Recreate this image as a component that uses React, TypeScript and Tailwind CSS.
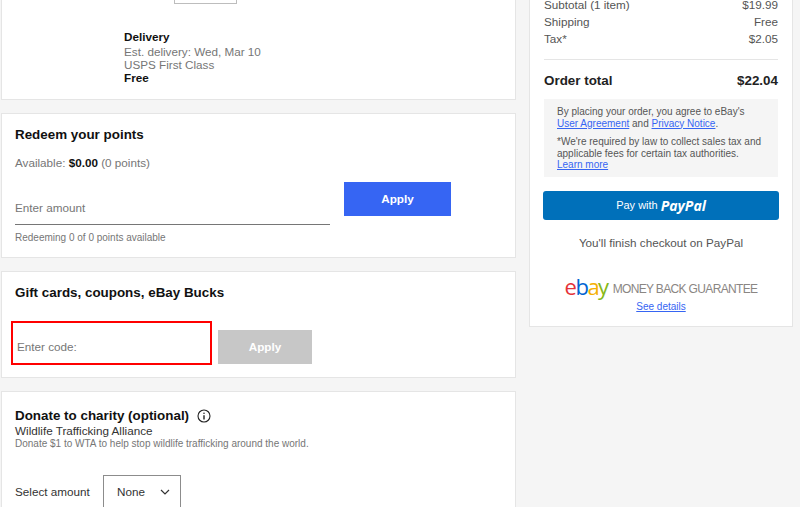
import React from "react";

function Card({ className = "", children }: { className?: string; children: React.ReactNode }) {
  return <section className={`bg-white border border-[#e5e5e5] ${className}`}>{children}</section>;
}

function Row({ label, value }: { label: string; value: string }) {
  return (
    <div className="flex justify-between h-[17px] leading-[17px]">
      <span>{label}</span>
      <span>{value}</span>
    </div>
  );
}

export default function App() {
  return (
    <div className="h-[507px] w-[800px] overflow-hidden bg-[#f5f5f5] text-[#333] text-[11.7px] flex items-start font-['Liberation_Sans',Arial,sans-serif]">
      <main className="ml-px w-[515px] flex flex-col gap-[13px] shrink-0">
        <Card className="h-[100px] border-t-0 relative pl-[122px] pt-[30px]">
          <div className="absolute left-[172px] top-0 w-[63px] h-[4px] border border-t-0 border-[#bdbdbd]" />
          <div className="font-bold text-[#111] leading-[14px]">Delivery</div>
          <div className="text-[#767676] leading-[13px] mt-[1px]">Est. delivery: Wed, Mar 10</div>
          <div className="text-[#767676] leading-[13px]">USPS First Class</div>
          <div className="font-bold text-[#111] leading-[13px]">Free</div>
        </Card>

        <Card className="h-[145px] pl-[13px] relative">
          <h2 className="text-[13.4px] font-bold text-[#111] mt-[12px] leading-[17px]">Redeem your points</h2>
          <p className="mt-[13px] leading-[14px] text-[#767676]">
            Available: <b className="text-[#111]">$0.00</b> (0 points)
          </p>
          <div className="flex mt-[12px] items-start">
            <div className="w-[315px] mt-[14px]">
              <div className="h-[29px] pt-[5px] leading-[14px] text-[#767676] border-b border-[#767676]">Enter amount</div>
              <div className="mt-[7px] text-[10px] leading-[12px] text-[#767676]">Redeeming 0 of 0 points available</div>
            </div>
            <button className="ml-[14px] w-[107px] h-[34px] bg-[#3665f3] text-white font-bold">Apply</button>
          </div>
        </Card>

        <Card className="h-[107px] pl-[13px] relative">
          <h2 className="text-[13.4px] font-bold text-[#111] mt-[12px] leading-[17px]">Gift cards, coupons, eBay Bucks</h2>
          <div className="flex items-start mt-[20px] -ml-[4px]">
            <div className="w-[201px] h-[44px] border-[2px] border-[#f00] pl-[4px] pt-[17px] leading-[14px] text-[#767676]">Enter code:</div>
            <button className="ml-[6px] mt-[9px] w-[94px] h-[34px] bg-[#c7c7c7] text-white font-bold">Apply</button>
          </div>
        </Card>

        <Card className="h-[130px] pl-[13px]">
          <div className="flex items-center mt-[15px] gap-[8px]">
            <h2 className="text-[13.4px] font-bold text-[#111] leading-[17px]">Donate to charity (optional)</h2>
            <svg width="14" height="14" viewBox="0 0 14 14" fill="none" stroke="#222" strokeWidth="1.1">
              <circle cx="7" cy="7" r="6" />
              <path d="M7 6.2V10.4" strokeWidth="1.4" />
              <circle cx="7" cy="4.2" r=".8" fill="#222" stroke="none" />
            </svg>
          </div>
          <div className="leading-[14px] text-[#333]">Wildlife Trafficking Alliance</div>
          <div className="text-[10px] leading-[12px] text-[#767676]">Donate $1 to WTA to help stop wildlife trafficking around the world.</div>
          <div className="flex items-start mt-[25px]">
            <span className="mt-[10px] leading-[14px] w-[88px]">Select amount</span>
            <div className="w-[78px] h-[40px] border border-[#8c8c8c] flex items-start pl-[13px] pt-[9px] leading-[14px]">
              None
              <svg className="ml-[15px] mt-[4px]" width="10" height="6" viewBox="0 0 10 6" fill="none" stroke="#333" strokeWidth="1.2">
                <path d="M1 1l4 4 4-4" />
              </svg>
            </div>
          </div>
        </Card>
      </main>

      <aside className="ml-[13px] w-[264px] h-[327px] bg-white border border-t-0 border-[#e5e5e5] px-[14px] shrink-0 overflow-hidden">
        <div className="-mt-[4px] text-[#555]">
          <Row label="Subtotal (1 item)" value="$19.99" />
          <Row label="Shipping" value="Free" />
          <Row label="Tax*" value="$2.05" />
        </div>
        <div className="mt-[12px] border-t border-[#e5e5e5] pt-[12px] flex justify-between text-[13.4px] font-bold text-[#222] leading-[17px]">
          <span>Order total</span>
          <span>$22.04</span>
        </div>
        <div className="mt-[10px] bg-[#f5f5f5] h-[78px] pl-[13px] pt-[7px] text-[10px] leading-[11.5px] text-[#555]">
          <p>
            By placing your order, you agree to eBay's
            <br />
            <a className="text-[#3665f3] underline">User Agreement</a> and <a className="text-[#3665f3] underline">Privacy Notice</a>.
          </p>
          <p className="mt-[7px]">
            *We're required by law to collect sales tax and
            <br />
            applicable fees for certain tax authorities.
            <br />
            <a className="text-[#3665f3] underline">Learn more</a>
          </p>
        </div>
        <button className="mt-[14px] w-[236px] h-[29px] -ml-px rounded-[3px] bg-[#0070ba] text-white flex items-center justify-center gap-[3px] text-[11px]">
          <span>Pay with</span>
          <span className="font-['Open_Sans',sans-serif] text-[14px] font-bold italic">PayPal</span>
        </button>
        <p className="mt-[16px] text-center text-[#555] leading-[14px]">You'll finish checkout on PayPal</p>
        <div className="mt-[26px] flex items-center justify-center h-[20px]">
          <span className="text-[22px] tracking-[-1.5px] leading-[20px] font-['Open_Sans',sans-serif]">
            <span className="text-[#e53238]">e</span>
            <span className="text-[#0064d2]">b</span>
            <span className="text-[#f5af02]">a</span>
            <span className="text-[#86b817]">y</span>
          </span>
          <span className="ml-[5px] mt-[5px] text-[12px] tracking-[-0.65px] text-[#8a8683]">MONEY BACK GUARANTEE</span>
        </div>
        <div className="mt-[5px] text-center text-[10px] leading-[12px]">
          <a className="text-[#3665f3] underline">See details</a>
        </div>
      </aside>
    </div>
  );
}
